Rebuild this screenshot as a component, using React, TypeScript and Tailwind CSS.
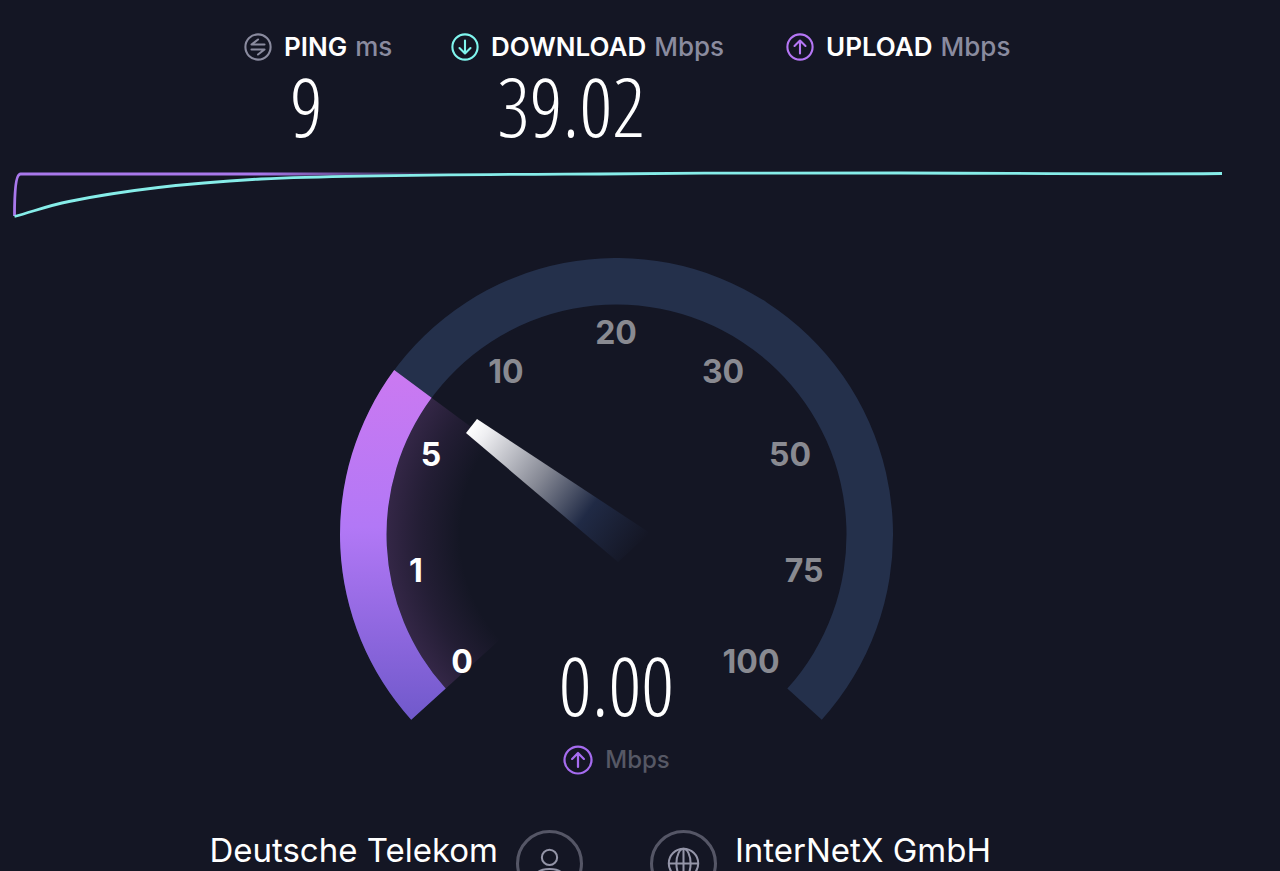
import React from 'react'

type IconName = 'ping' | 'down' | 'up'

interface RoundIconProps {
    name: IconName;
    className: string;
}

const iconPaths: Record<IconName, string> = {
    ping: "M20.5 11.5H7.5L14 6.5M7.5 16.5H20.5L14 21.5",
    down: "M14 7.5V20M8.5 15L14 20.5L19.5 15",
    up: "M14 20.5V8M8.5 13L14 7.5L19.5 13"
}

const RoundIcon:React.FC<RoundIconProps> = ({ name, className }) => {
    return (
        <svg viewBox="0 0 28 28" fill="none" stroke="currentColor" strokeWidth="2.1" className={className} aria-hidden="true">
            <circle cx="14" cy="14" r="12.6" />
            <path d={iconPaths[name]} strokeLinecap="round" strokeLinejoin="round" />
        </svg>
    )
}

interface ResultProps {
    icon: IconName;
    iconColor: string;
    label: string;
    unit: string;
    value?: string;
    width: string;
}

const Result:React.FC<ResultProps> = ({ icon, iconColor, label, unit, value, width }) => {
    return (
        <div className={`${width} whitespace-nowrap`}>
            <div className="flex items-center gap-3">
                <RoundIcon name={icon} className={`size-7 shrink-0 ${iconColor}`} />
                <div className="flex gap-2 text-[26px]/8">
                    <span className="font-semibold">{label}</span>
                    <span className="font-medium text-[#8a8b9f]">{unit}</span>
                </div>
            </div>
            {value && (
                <div className="pl-[46px] font-['Open_Sans_Condensed_Light','Open_Sans_Light_Condensed','Open_Sans_Condensed',Roboto,sans-serif] text-[82px]/[84px] font-light">
                    {value}
                </div>
            )}
        </div>
    )
}

const results: ResultProps[] = [
    { icon: 'ping', iconColor: 'text-[#8a8b9f]', label: 'PING', unit: 'ms', value: '9', width: 'w-[147px]' },
    { icon: 'down', iconColor: 'text-[#80f5ee]', label: 'DOWNLOAD', unit: 'Mbps', value: '39.02', width: 'w-[275px]' },
    { icon: 'up', iconColor: 'text-[#b576f5]', label: 'UPLOAD', unit: 'Mbps', width: 'w-[224px]' }
]

const ticks = [
    { label: '0', x: 122, y: 415, active: true },
    { label: '1', x: 76, y: 324, active: true },
    { label: '5', x: 91, y: 208, active: true },
    { label: '10', x: 166, y: 125, active: false },
    { label: '20', x: 276, y: 86, active: false },
    { label: '30', x: 383, y: 125, active: false },
    { label: '50', x: 450, y: 208, active: false },
    { label: '75', x: 464, y: 324, active: false },
    { label: '100', x: 411, y: 415, active: false }
]

const SpeedLines = () => {
    return (
        <svg viewBox="0 0 1280 60" preserveAspectRatio="none" className="h-[60px] w-full" fill="none" strokeWidth="2.8" aria-hidden="true">
            <defs>
                <linearGradient id="uploadLine" gradientUnits="userSpaceOnUse" x1="14" y1="0" x2="460" y2="0">
                    <stop offset="0" stopColor="#a978ec" />
                    <stop offset="0.55" stopColor="#a978ec" />
                    <stop offset="1" stopColor="#a978ec" stopOpacity="0" />
                </linearGradient>
            </defs>
            <path d="M14.5 51C14.5 30 15.5 9 20.5 9H460" stroke="url(#uploadLine)" />
            <path
                d="M14.5 51.5C32 47 48 40.5 69 36.5C123 25.5 186 18 261 14C360 9.5 480 9.5 600 9C700 8 820 7.5 900 8C1000 8 1100 9.5 1222 8.5"
                stroke="#86ede9"
            />
        </svg>
    )
}

const Gauge = () => {
    return (
        <svg viewBox="0 0 553 462" className="w-[553px] [grid-area:1/1]" role="img" aria-label="Upload speed gauge">
            <defs>
                <linearGradient id="progress" x1="0" y1="0" x2="0" y2="1">
                    <stop offset="0" stopColor="#cb79f1" />
                    <stop offset="0.45" stopColor="#b278f6" />
                    <stop offset="1" stopColor="#7059cb" />
                </linearGradient>
                <radialGradient id="glow" gradientUnits="userSpaceOnUse" cx="276.5" cy="276.5" r="230">
                    <stop offset="0.68" stopColor="#9b59b6" stopOpacity="0" />
                    <stop offset="0.85" stopColor="#9b59b6" stopOpacity="0.11" />
                    <stop offset="1" stopColor="#9f5fba" stopOpacity="0.23" />
                </radialGradient>
                <linearGradient id="needle" gradientUnits="userSpaceOnUse" x1="131" y1="168" x2="298" y2="291">
                    <stop offset="0" stopColor="#ffffff" />
                    <stop offset="0.08" stopColor="#eeeef1" />
                    <stop offset="0.42" stopColor="#858894" />
                    <stop offset="0.7" stopColor="#202a45" />
                    <stop offset="1" stopColor="#202a45" stopOpacity="0" />
                </linearGradient>
            </defs>
            <path d="M71.2 461.7A276.5 276.5 0 1 1 481.8 461.7L447.3 430.6A230 230 0 1 0 105.7 430.6Z" fill="#24304b" />
            <path d="M105.7 430.6A230 230 0 0 1 91.6 139.8L276.5 276.5Z" fill="url(#glow)" />
            <path d="M71.2 461.7A276.5 276.5 0 0 1 54.2 112.1L91.6 139.8A230 230 0 0 0 105.7 430.6Z" fill="url(#progress)" />
            <path d="M137 161L126 175L278 304L310 275Z" fill="url(#needle)" />
            {ticks.map((tick) => (
                <text
                    key={tick.label}
                    x={tick.x}
                    y={tick.y}
                    textAnchor="middle"
                    className={`text-[32px] font-bold ${tick.active ? 'fill-white' : 'fill-[#898a91]'}`}
                >
                    {tick.label}
                </text>
            ))}
        </svg>
    )
}

const App = () => {
    return (
        <main className="h-screen overflow-hidden bg-[#141624] font-[Inter,sans-serif] text-white">
            {/* results */}
            <div className="flex h-[165px] justify-center gap-[60px] pt-[31px] pr-[26px]">
                {results.map((result) => (
                    <Result key={result.label} {...result} />
                ))}
            </div>

            <SpeedLines />

            {/* gauge */}
            <div className="flex flex-col items-center pt-[33px] pr-[47px]">
                <div className="grid justify-items-center">
                    <Gauge />
                    <div className="self-end font-['Open_Sans_Condensed_Light','Open_Sans_Light_Condensed','Open_Sans_Condensed',Roboto,sans-serif] text-[82px]/[72px] font-light [grid-area:1/1]">
                        0.00
                    </div>
                </div>
                <div className="mt-6 flex items-center gap-3">
                    <RoundIcon name="up" className="size-[30px] text-[#a66cf0]" />
                    <span className="text-2xl/8 font-medium text-[#565865]">Mbps</span>
                </div>
            </div>

            {/* provider and server */}
            <div className="mt-[54px] grid grid-cols-2 gap-[67px] pr-[47px] text-[33px]/[40px] whitespace-nowrap">
                <div className="flex items-start justify-end gap-[18px]">
                    <div>Deutsche Telekom</div>
                    <svg viewBox="0 0 66 66" fill="none" className="size-[67px] shrink-0" aria-hidden="true">
                        <circle cx="33" cy="33" r="31.5" stroke="#555666" strokeWidth="3" />
                        <circle cx="33" cy="27" r="7.5" stroke="#9495a8" strokeWidth="2" />
                        <path d="M19 48C19 42 24 38.5 33 38.5S47 42 47 48Z" stroke="#9495a8" strokeWidth="2" />
                    </svg>
                </div>
                <div className="flex items-start gap-[18px]">
                    <svg viewBox="0 0 66 66" fill="none" className="size-[67px] shrink-0" aria-hidden="true">
                        <circle cx="33" cy="33" r="31.5" stroke="#555666" strokeWidth="3" />
                        <g stroke="#9495a8" strokeWidth="2">
                            <circle cx="33" cy="33" r="14.5" />
                            <ellipse cx="33" cy="33" rx="7" ry="14.5" />
                            <path d="M18.5 33H47.5M33 18.5V47.5" />
                        </g>
                    </svg>
                    <div>InterNetX GmbH</div>
                </div>
            </div>
        </main>
    )
}

export default App
